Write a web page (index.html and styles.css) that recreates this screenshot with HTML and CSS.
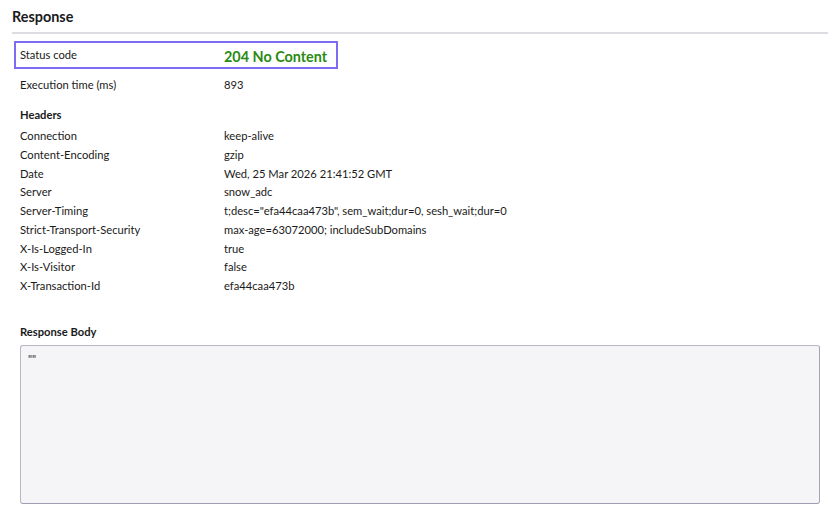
FILE: index.html
```html
<!DOCTYPE html>
<html>
<head>
<meta charset="utf-8">
<link rel="stylesheet" href="styles.css">
</head>
<body>
<div class="page">
  <h2 class="title">Response</h2>
  <div class="rule"></div>
  <div class="status">
    <span class="label">Status code</span>
    <span class="status-value">204 No Content</span>
  </div>
  <div class="row exec"><span class="label">Execution time (ms)</span><span class="value">893</span></div>
  <div class="section">Headers</div>
  <div class="headers">
    <div class="row"><span class="label">Connection</span><span class="value">keep-alive</span></div>
    <div class="row"><span class="label">Content-Encoding</span><span class="value">gzip</span></div>
    <div class="row"><span class="label">Date</span><span class="value">Wed, 25 Mar 2026 21:41:52 GMT</span></div>
    <div class="row"><span class="label">Server</span><span class="value">snow_adc</span></div>
    <div class="row"><span class="label">Server-Timing</span><span class="value">t;desc="efa44caa473b", sem_wait;dur=0, sesh_wait;dur=0</span></div>
    <div class="row"><span class="label">Strict-Transport-Security</span><span class="value">max-age=63072000; includeSubDomains</span></div>
    <div class="row"><span class="label">X-Is-Logged-In</span><span class="value">true</span></div>
    <div class="row"><span class="label">X-Is-Visitor</span><span class="value">false</span></div>
    <div class="row"><span class="label">X-Transaction-Id</span><span class="value">efa44caa473b</span></div>
  </div>
  <div class="section body-title">Response Body</div>
  <div class="body-box">""</div>
</div>
</body>
</html>
```
FILE: styles.css
```css
html, body {
  margin: 0;
  padding: 0;
  background: #ffffff;
}
.page {
  font-family: Lato, "Open Sans", sans-serif;
  color: #1a1a20;
  font-size: 11.2px;
  padding: 7px 4px 0 12px;
}
.title {
  margin: 0;
  font-size: 14.4px;
  line-height: 20px;
  font-weight: 700;
}
.rule {
  height: 2px;
  background: #dcdde3;
  margin-top: 5px;
}
.status {
  box-sizing: border-box;
  margin: 7px 0 0 2px;
  width: 324px;
  height: 28px;
  border: 2px solid #7b6cf3;
  display: flex;
  align-items: center;
  padding-left: 4px;
  white-space: nowrap;
}
.label {
  width: 204px;
  flex: none;
}
.status .label {
  margin-top: -2px;
}
.status-value {
  color: #2a8a12;
  font-weight: 700;
  font-size: 14.4px;
  margin-top: 3px;
}
.row {
  display: flex;
  line-height: 18.75px;
  padding-left: 8px;
}
.exec {
  margin-top: 6.6px;
}
.section {
  font-weight: 700;
  line-height: 18.75px;
  padding-left: 8px;
  margin-top: 12px;
}
.headers {
  margin-top: 2px;
}
.body-title {
  margin-top: 27px;
}
.body-box {
  box-sizing: border-box;
  margin: 3px 8px 0 8px;
  height: 159px;
  background: #f5f5f8;
  border: 1px solid #b8b8c4;
  border-bottom-color: #9e9eb0;
  border-right-color: #a4a4b6;
  border-radius: 3px;
  padding: 6px 7px;
  font-size: 11px;
  line-height: 14px;
  color: #2a2a30;
}
```
